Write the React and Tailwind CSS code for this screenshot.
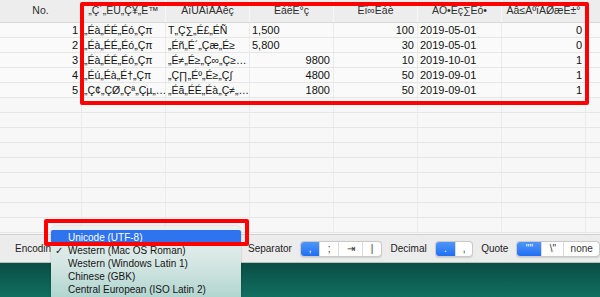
import React from 'react';

const headers = [
  { t: 'No.', w: 'w-[82px]' },
  { t: '„Ç´„ÉÜ„Ç¥„É™', w: 'w-[84px]' },
  { t: 'ÂïÜÂìÅÂêç', w: 'w-[84px]' },
  { t: 'ÈáëÈ°ç', w: 'w-[84px]' },
  { t: 'Êï∞Èáè', w: 'w-[84px]' },
  { t: 'ÂÖ•Ëç∑Êó•', w: 'w-[84px]' },
  { t: 'Ââ≤ÂºïÂØæË±°', w: 'w-[84px]' },
];

// r = right aligned, l = left aligned
const rows = [
  [['1', 'r'], ['„Éà„ÉÉ„Éó„Çπ', 'l'], ['T„Ç∑„É£„ÉÑ', 'l'], ['1,500', 'l'], ['100', 'r'], ['2019-05-01', 'l'], ['0', 'r']],
  [['2', 'r'], ['„Éà„ÉÉ„Éó„Çπ', 'l'], ['„Éñ„É´„Çæ„É≥', 'l'], ['5,800', 'l'], ['30', 'r'], ['2019-05-01', 'l'], ['0', 'r']],
  [['3', 'r'], ['„Éà„ÉÉ„Éó„Çπ', 'l'], ['„É≠„É≥„Ç∞„Ç≥…', 'l'], ['9800', 'r'], ['10', 'r'], ['2019-10-01', 'l'], ['1', 'r']],
  [['4', 'r'], ['„Éú„Éà„É†„Çπ', 'l'], ['„Ç∏„Éº„É≥„Ç∫', 'l'], ['4800', 'r'], ['50', 'r'], ['2019-09-01', 'l'], ['1', 'r']],
  [['5', 'r'], ['„Ç¢„ÇØ„Çª„Çµ„…', 'l'], ['„Éã„ÉÉ„Éà„Ç≠„…', 'l'], ['1800', 'r'], ['50', 'r'], ['2019-09-01', 'l'], ['1', 'r']],
];

const emptyRows = Array.from({ length: 10 });

const Segmented = ({ items }) => (
  <div className="flex h-[16px] rounded-[4px] border border-[#c9c9c9] bg-white overflow-hidden shadow-[0_0.5px_1px_rgba(0,0,0,0.12)]">
    {items.map((it, i) => (
      <div
        key={i}
        className={`${it.w} flex items-center justify-center text-[10px] leading-none ${
          it.on ? 'bg-linear-to-b from-[#4f95f8] to-[#1f6ff4] text-white' : 'text-[#333]'
        } ${i > 0 && !it.on ? 'border-l border-[#dadada]' : ''}`}
      >
        {it.label}
      </div>
    ))}
  </div>
);

const App = () => {
  return (
    <div className="relative w-[600px] h-[297px] overflow-hidden bg-[#f7f7f7] font-['Liberation_Sans',sans-serif] text-[#111]">
      {/* Table */}
      <div className="flex flex-col h-[234px] overflow-hidden">
        <div className="flex h-[23px] shrink-0 bg-[#ededed] border-b border-[#d8d8d8]">
          {headers.map((h, i) => (
            <div
              key={i}
              className={`${h.w} shrink-0 flex items-center justify-center text-[10.5px] text-[#2e2e2e] border-r border-[#f7f7f7]`}
            >
              {h.t}
            </div>
          ))}
          <div className="flex-1" />
        </div>

        {rows.map((r, ri) => (
          <div key={ri} className="flex h-[15px] shrink-0 border-b border-[#e6e6e6] bg-[#fafafa]">
            {r.map(([t, a], ci) => (
              <div
                key={ci}
                className={`${headers[ci].w} shrink-0 flex items-center leading-none border-r border-[#ebebeb] ${
                  ci === 1 || ci === 2 ? 'text-[10.5px]' : 'text-[11px]'
                } ${a === 'r' ? 'justify-end pr-[3px]' : 'justify-start pl-[2px]'} whitespace-nowrap overflow-hidden`}
              >
                {t}
              </div>
            ))}
            <div className="flex-1" />
          </div>
        ))}

        {emptyRows.map((_, ri) => (
          <div key={ri} className="flex h-[15px] shrink-0 border-b border-[#e6e6e6]">
            {headers.map((h, ci) => (
              <div key={ci} className={`${h.w} shrink-0 border-r border-[#ebebeb]`} />
            ))}
            <div className="flex-1" />
          </div>
        ))}
      </div>

      {/* Bottom options bar */}
      <div className="flex items-center h-[29px] bg-[#ececec] border-t border-[#d2d2d2] border-b border-b-[#bdbdbd] pl-[15px] gap-2 text-[10px] text-[#222]">
        <span className="w-[225px] shrink-0">Encoding</span>
        <span>Separator</span>
        <Segmented
          items={[
            { label: ',', w: 'w-[19px]', on: true },
            { label: ';', w: 'w-[20px]' },
            { label: '⇥', w: 'w-[25px]' },
            { label: '|', w: 'w-[19px]' },
          ]}
        />
        <span className="ml-[1px]">Decimal</span>
        <Segmented
          items={[
            { label: '.', w: 'w-[20px]', on: true },
            { label: ',', w: 'w-[18px]' },
          ]}
        />
        <span>Quote</span>
        <Segmented
          items={[
            { label: '""', w: 'w-[25px]', on: true },
            { label: '\\"', w: 'w-[23px]' },
            { label: 'none', w: 'w-[37px]' },
          ]}
        />
      </div>

      {/* Desktop */}
      <div className="h-[40px] bg-linear-to-b from-[#0a4d44] to-[#117666]" />

      {/* Encoding popup menu */}
      <div className="absolute left-[51px] top-[226px] w-[190px] h-[80px] rounded-t-[5px] bg-linear-to-b from-[#eef2f1] via-[#d2e5e2] to-[#a7d1ca] shadow-[0_0_2px_rgba(0,0,0,0.25)] pt-[4px] text-[10px] text-[#151515]">
        <div className="h-[14px] flex items-center pl-[17px] bg-[#2f73ee] text-white rounded-[2px]">Unicode (UTF-8)</div>
        <div className="relative h-[13px] flex items-center pl-[17px]">
          <span className="absolute left-[4px] text-[10px]">✓</span>
          Western (Mac OS Roman)
        </div>
        <div className="h-[13px] flex items-center pl-[17px]">Western (Windows Latin 1)</div>
        <div className="h-[13px] flex items-center pl-[17px]">Chinese (GBK)</div>
        <div className="h-[13px] flex items-center pl-[17px]">Central European (ISO Latin 2)</div>
      </div>

      {/* Annotation boxes */}
      <div className="absolute left-[80px] top-[2px] w-[509px] h-[103px] border-4 border-[#ff0000] rounded-[2px] pointer-events-none" />
      <div className="absolute left-[44px] top-[219px] w-[205px] h-[27px] border-4 border-[#ff0000] rounded-[2px] pointer-events-none" />
    </div>
  );
};

export default App;
